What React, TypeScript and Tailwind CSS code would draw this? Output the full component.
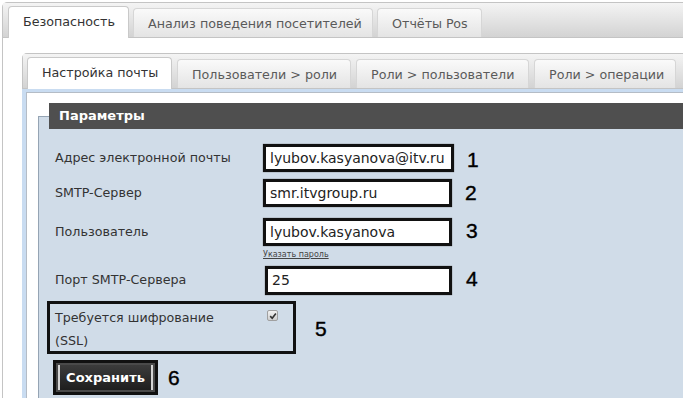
import { ReactNode } from "react";
import clsx from "clsx";

const outerTabs = [
	{ text: "Безопасность", width: "w-[121px]", active: true },
	{ text: "Анализ поведения посетителей", width: "w-[240px]", active: false },
	{ text: "Отчёты Pos", width: "w-[105px]", active: false },
];

const innerTabs = [
	{ text: "Настройка почты", width: "w-[145px]", active: true },
	{ text: "Пользователи > роли", width: "w-[174px]", active: false },
	{ text: "Роли > пользователи", width: "w-[173px]", active: false },
	{ text: "Роли > операции", width: "w-[142px]", active: false },
];

const Tab = ({ text, width, active }: { text: string; width: string; active: boolean }) => (
	<div
		className={clsx(
			width,
			"shrink-0 flex items-center pl-[14px] rounded-t-[4px] border border-b-0 text-[12.7px] whitespace-nowrap",
			active
				? "h-[32px] -mb-px bg-white border-[#c9c9c9] text-[#333] pb-[1px]"
				: "h-[29px] bg-gradient-to-b from-[#fafafa] to-[#e4e4e4] border-[#d6d6d6] text-[#5a5a5a] pt-[2px]",
		)}
	>
		{text}
	</div>
);

const TabBar = ({ tabs, gap }: { tabs: typeof outerTabs; gap: string }) => (
	<div
		className={clsx(
			"h-[35px] flex items-end border-b border-[#c4c4c4] bg-gradient-to-b from-[#f4f4f4] to-[#d3d3d3]",
			gap,
		)}
	>
		{tabs.map((t) => (
			<Tab key={t.text} {...t} />
		))}
	</div>
);

const Mark = ({ n, className }: { n: number; className?: string }) => (
	<span
		className={clsx(
			"font-['Liberation_Sans',Arial,sans-serif] text-[21px] leading-none text-black [-webkit-text-stroke:0.4px_black]",
			className,
		)}
	>
		{n}
	</span>
);

const Field = ({ value, className }: { value: string; className?: string }) => (
	<div
		className={clsx(
			"h-[28px] border-[3px] border-[#111] bg-white flex items-center pl-[4px] text-[14px] text-[#222] shadow-[0_0_1px_#555]",
			className,
		)}
	>
		{value}
	</div>
);

const Row = ({ label, children, className }: { label: string; children: ReactNode; className?: string }) => (
	<div className={clsx("flex", className)}>
		<div className="w-[208px] shrink-0 h-[28px] flex items-center text-[12.7px] text-[#333]">{label}</div>
		{children}
	</div>
);

export default function App() {
	return (
		<div className="w-[683px] h-[398px] overflow-hidden bg-white font-['DejaVu_Sans',Verdana,sans-serif]">
			<div className="ml-[2px] mt-[2px] w-[740px] h-[440px] border border-[#c4c4c4] rounded-tl-[5px]">
				<TabBar tabs={outerTabs} gap="gap-[4px] pl-[5px]" />

				<div className="ml-[19px] mt-[15px]">
					<div className="border-t border-l border-[#c4c4c4] rounded-tl-[5px]">
						<TabBar tabs={innerTabs} gap="gap-[5px] pl-[4px]" />
					</div>

					<div className="border-t-[3px] border-l-[4px] border-[#c9dcf1]">
						<div className="border-t border-l border-[#b4bcc6] bg-white pt-[10px] pl-[11px] h-[400px]">
							<div className="mt-[13px] border border-[#95a4b4] bg-[#d0dce8] h-[380px]">
								<div className="-mt-[14px] ml-[10px] h-[26px] bg-[#4f4f4f] text-white font-bold text-[13px] pl-[10px] flex items-center">
									Параметры
								</div>

								<div className="pl-[16px] pt-[15px] flex flex-col">
									<Row label="Адрес электронной почты">
										<Field value="lyubov.kasyanova@itv.ru" className="w-[191px]" />
										<Mark n={1} className="ml-[13px] mt-[5px]" />
									</Row>

									<Row label="SMTP-Сервер" className="mt-[7px]">
										<Field value="smr.itvgroup.ru" className="w-[189px]" />
										<Mark n={2} className="ml-[13px] mt-[3px]" />
									</Row>

									<div className="mt-[11px]">
										<Row label="Пользователь">
											<Field value="lyubov.kasyanova" className="w-[189px]" />
											<Mark n={3} className="ml-[14px] mt-[2px]" />
										</Row>
										<div className="pl-[208px] mt-[4px] text-[8px] leading-[9px] text-[#444] underline">
											Указать пароль
										</div>
									</div>

									<Row label="Порт SMTP-Сервера" className="mt-[7px]">
										<Field value="25" className="w-[187px] ml-[2px] h-[29px]" />
										<Mark n={4} className="ml-[14px] mt-[2px]" />
									</Row>

									<div className="flex items-center mt-[6px] -ml-[8px]">
										<div className="w-[249px] h-[53px] border-[3px] border-[#111] pl-[5px] pt-[2px] flex text-[12.7px] text-[#333] leading-[23px]">
											<div className="w-[212px]">
												Требуется шифрование
												<br />
												(SSL)
											</div>
											<div className="mt-[4px] w-[11px] h-[11px] rounded-[2px] border border-[#a0a0a0] bg-gradient-to-b from-[#f2f2f2] to-[#cfcfcf] flex items-center justify-center">
												<svg viewBox="0 0 10 10" className="w-[8px] h-[8px]">
													<path d="M1.5 5.2 L4 7.8 L8.6 1.8" fill="none" stroke="#333" strokeWidth="2" />
												</svg>
											</div>
										</div>
										<Mark n={5} className="ml-[19px] mt-[1px]" />
									</div>

									<div className="flex items-center mt-[6px] -ml-[2px]">
										<div className="w-[105px] h-[35px] border-[3px] border-[#111] bg-[#4a4a4a] p-[2px]">
											<div className="h-full border-x-[2px] border-[#d4d4d4] bg-gradient-to-b from-[#3c3c3c] to-[#1e1e1e] flex items-center justify-center text-white font-bold text-[13px]">
												Сохранить
											</div>
										</div>
										<Mark n={6} className="ml-[10px]" />
									</div>
								</div>
							</div>
						</div>
					</div>
				</div>
			</div>
		</div>
	);
}
